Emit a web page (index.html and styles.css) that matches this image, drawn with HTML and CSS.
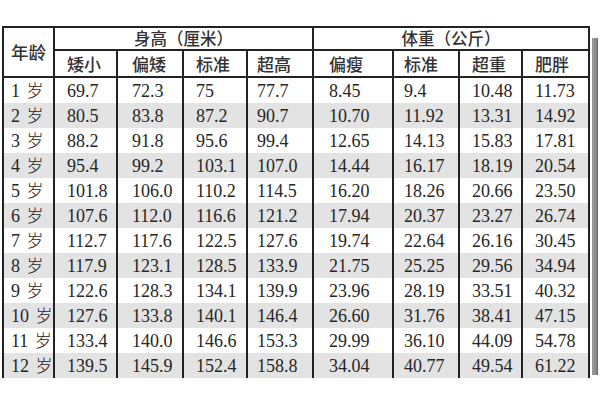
FILE: index.html
```html
<!DOCTYPE html>
<html lang="zh-CN">
<head>
<meta charset="utf-8">
<title>儿童身高体重标准表</title>
<link rel="stylesheet" href="styles.css">
</head>
<body>
<div class="sheet">
  <table class="growth">
    <colgroup>
      <col class="c-age"><col class="c1"><col class="c2"><col class="c3"><col class="c4"><col class="c5"><col class="c6"><col class="c7"><col class="c8">
    </colgroup>
    <thead>
      <tr class="group-row">
        <th rowspan="2" class="age-head">年龄</th>
        <th colspan="4" class="group">身高（厘米）</th>
        <th colspan="4" class="group">体重（公斤）</th>
      </tr>
      <tr class="sub-row">
        <th>矮小</th><th>偏矮</th><th>标准</th><th>超高</th>
        <th>偏瘦</th><th>标准</th><th>超重</th><th>肥胖</th>
      </tr>
    </thead>
    <tbody>
      <tr><td class="age">1 <span class="sui">岁</span></td><td>69.7</td><td>72.3</td><td>75</td><td>77.7</td><td>8.45</td><td>9.4</td><td>10.48</td><td>11.73</td></tr>
      <tr><td class="age">2 <span class="sui">岁</span></td><td>80.5</td><td>83.8</td><td>87.2</td><td>90.7</td><td>10.70</td><td>11.92</td><td>13.31</td><td>14.92</td></tr>
      <tr><td class="age">3 <span class="sui">岁</span></td><td>88.2</td><td>91.8</td><td>95.6</td><td>99.4</td><td>12.65</td><td>14.13</td><td>15.83</td><td>17.81</td></tr>
      <tr><td class="age">4 <span class="sui">岁</span></td><td>95.4</td><td>99.2</td><td>103.1</td><td>107.0</td><td>14.44</td><td>16.17</td><td>18.19</td><td>20.54</td></tr>
      <tr><td class="age">5 <span class="sui">岁</span></td><td>101.8</td><td>106.0</td><td>110.2</td><td>114.5</td><td>16.20</td><td>18.26</td><td>20.66</td><td>23.50</td></tr>
      <tr><td class="age">6 <span class="sui">岁</span></td><td>107.6</td><td>112.0</td><td>116.6</td><td>121.2</td><td>17.94</td><td>20.37</td><td>23.27</td><td>26.74</td></tr>
      <tr><td class="age">7 <span class="sui">岁</span></td><td>112.7</td><td>117.6</td><td>122.5</td><td>127.6</td><td>19.74</td><td>22.64</td><td>26.16</td><td>30.45</td></tr>
      <tr><td class="age">8 <span class="sui">岁</span></td><td>117.9</td><td>123.1</td><td>128.5</td><td>133.9</td><td>21.75</td><td>25.25</td><td>29.56</td><td>34.94</td></tr>
      <tr><td class="age">9 <span class="sui">岁</span></td><td>122.6</td><td>128.3</td><td>134.1</td><td>139.9</td><td>23.96</td><td>28.19</td><td>33.51</td><td>40.32</td></tr>
      <tr><td class="age">10 <span class="sui">岁</span></td><td>127.6</td><td>133.8</td><td>140.1</td><td>146.4</td><td>26.60</td><td>31.76</td><td>38.41</td><td>47.15</td></tr>
      <tr><td class="age">11 <span class="sui">岁</span></td><td>133.4</td><td>140.0</td><td>146.6</td><td>153.3</td><td>29.99</td><td>36.10</td><td>44.09</td><td>54.78</td></tr>
      <tr><td class="age">12 <span class="sui">岁</span></td><td>139.5</td><td>145.9</td><td>152.4</td><td>158.8</td><td>34.04</td><td>40.77</td><td>49.54</td><td>61.22</td></tr>
    </tbody>
  </table>
  <div class="edge"></div>
</div>
</body>
</html>
```
FILE: styles.css
```css
html, body {
  margin: 0;
  padding: 0;
  background: #fff;
}

body {
  padding: 26px 0 0 2px;
}

.sheet {
  display: flex;
  align-items: flex-start;
  gap: 2px;
}

.growth {
  border-collapse: collapse;
  table-layout: fixed;
  width: 588px;
  font-family: "Liberation Serif", "Noto Sans CJK SC", serif;
  font-size: 18px;
  color: #262626;
}

.c-age { width: 51px; }
.c1 { width: 63px; }
.c2 { width: 66px; }
.c3 { width: 64px; }
.c4 { width: 66px; }
.c5 { width: 80px; }
.c6 { width: 66px; }
.c7 { width: 63px; }
.c8 { width: 67px; }

.growth th,
.growth td {
  padding: 0 0 0 12px;
  text-align: left;
  white-space: nowrap;
  border-left: 2px solid #222;
  border-right: 2px solid #222;
}

.growth thead th {
  font-family: "Noto Sans CJK SC", sans-serif;
  font-weight: 500;
  font-size: 17px;
  color: #333;
  border-top: 2px solid #222;
  border-bottom: 2px solid #222;
  line-height: 1;
}

.group-row th {
  height: 21px;
}

.growth th.group {
  text-align: center;
  padding: 0;
  font-size: 16.5px;
}

.growth th.age-head {
  text-align: center;
  padding: 0;
  font-size: 17.5px;
}

.sub-row th {
  height: 25px;
}

.growth tbody td {
  height: 25px;
  line-height: 1;
}

.growth tbody tr:nth-child(even) td {
  background: #e3e3e3;
}

.growth td.age {
  padding-left: 7px;
  word-spacing: 2px;
}

.sui {
  font-family: "Noto Sans CJK SC", sans-serif;
  font-weight: 300;
  font-size: 17px;
}

.growth td:nth-child(2), .sub-row th:nth-child(1) { padding-left: 12px; }
.growth td:nth-child(3), .sub-row th:nth-child(2) { padding-left: 14px; }
.growth td:nth-child(4), .sub-row th:nth-child(3) { padding-left: 12px; }
.growth td:nth-child(5), .sub-row th:nth-child(4) { padding-left: 9px; }
.growth td:nth-child(6), .sub-row th:nth-child(5) { padding-left: 15px; }
.growth td:nth-child(7), .sub-row th:nth-child(6) { padding-left: 10px; }
.growth td:nth-child(8), .sub-row th:nth-child(7) { padding-left: 12px; }
.growth td:nth-child(9), .sub-row th:nth-child(8) { padding-left: 12px; }

.edge {
  width: 6px;
  height: 337px;
  margin-top: 12px;
  background: linear-gradient(to right, #9a9a9a, #8a8a8a 70%, #5e5e5e);
}
```
